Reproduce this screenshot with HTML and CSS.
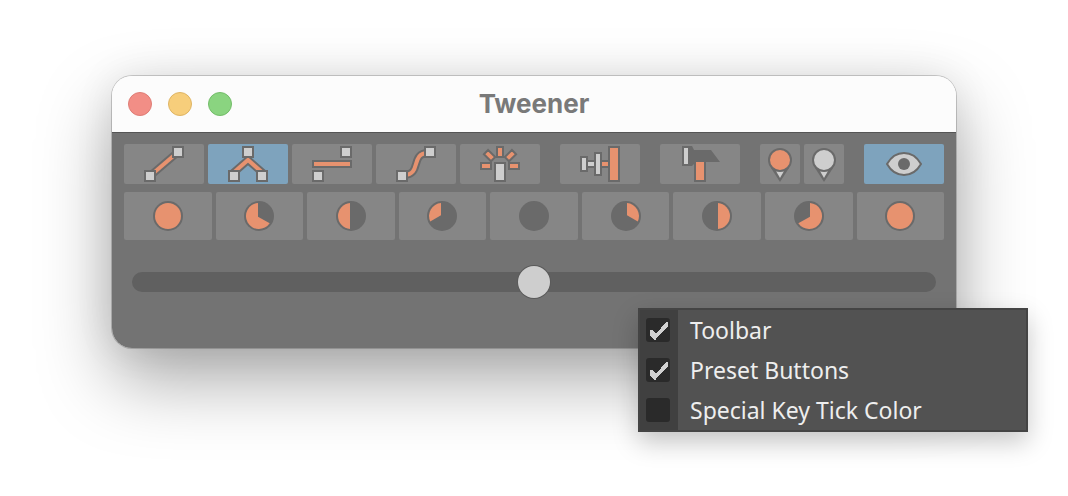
FILE: index.html
```html
<!DOCTYPE html>
<html lang="en">
<head>
<meta charset="utf-8">
<title>Tweener</title>
<link rel="stylesheet" href="styles.css">
</head>
<body>
<main class="window">
  <header class="titlebar">
    <div class="lights">
      <button class="light close" aria-label="Close"></button>
      <button class="light minimize" aria-label="Minimize"></button>
      <button class="light maximize" aria-label="Zoom"></button>
    </div>
    <h1 class="title">Tweener</h1>
  </header>
  <section class="panel">
    <div class="toolbar">
      <div class="group modes">
        <button class="tool" aria-label="Between"><svg class="icon" viewBox="0 0 40 40"><path class="edge" d="M6 32L34 8"/><path class="core" d="M6 32L34 8"/><path class="node" d="M1 27h10v10H1zM29 3h10v10H29z"/></svg></button>
        <button class="tool active" aria-label="Towards"><svg class="icon" viewBox="0 0 40 40"><path class="edge" d="M4 30L20 16L36 30"/><path class="core" d="M4 30L20 16L36 30"/><path class="node" d="M1 27h10v10H1zM29 27h10v10H29zM15 3h10v10H15z"/></svg></button>
        <button class="tool" aria-label="Average"><svg class="icon" viewBox="0 0 40 40"><path class="accent" d="M1 17h38v6H1z"/><path class="node" d="M1 27h10v10H1zM29 3h10v10H29z"/></svg></button>
        <button class="tool" aria-label="Curve"><svg class="icon" viewBox="0 0 40 40"><path class="edge" d="M8 31C26 31 14 9 32 9"/><path class="core" d="M8 31C26 31 14 9 32 9"/><path class="node" d="M1 27h10v10H1zM29 3h10v10H29z"/></svg></button>
        <button class="tool" aria-label="Default"><svg class="icon" viewBox="0 0 40 40"><path class="accent" d="M17 3h6v10h-6zM1 19h10v6H1zM29 19h10v6H29z"/><path class="accent" d="M8.1 6L15.2 13L11 17.3L3.9 10.2zM31.9 6L24.8 13L29 17.3L36.1 10.2z"/><path class="node" d="M15 19h10v18H15z"/></svg></button>
      </div>
      <div class="group">
        <button class="tool" aria-label="Nudge"><svg class="icon" viewBox="0 0 40 40"><path class="node" d="M7 17h8v6H7z"/><path class="accent" d="M21 17h8v6h-8z"/><path class="node" d="M1 13h6v14H1zM15 9h6v22h-6z"/><path class="accent" d="M29 3h10v34H29z"/></svg></button>
      </div>
      <div class="group">
        <button class="tool" aria-label="Hammer"><svg class="icon" viewBox="0 0 40 40"><path class="dark" d="M2 2h10l2 4h17l9 12H26v20H14V20l-2 2H2z"/><path class="light-fill" d="M4 4h4v16H4z"/><path class="accent-fill" d="M16 18h8v18h-8z"/></svg></button>
      </div>
      <div class="group pins">
        <button class="tool" aria-label="Special key"><svg class="icon" viewBox="0 0 40 40"><path class="dark" d="M11 24L20 38L29 24z"/><path class="light-fill" d="M16 27h8l-4 7z"/><circle class="accent" cx="20" cy="16" r="11"/></svg></button>
        <button class="tool" aria-label="Normal key"><svg class="icon" viewBox="0 0 40 40"><path class="dark" d="M11 24L20 38L29 24z"/><path class="light-fill" d="M16 27h8l-4 7z"/><circle class="node" cx="20" cy="16" r="11"/></svg></button>
      </div>
      <div class="group">
        <button class="tool active" aria-label="Overshoot"><svg class="icon" viewBox="0 0 40 40"><path class="node" d="M3 20C7 13 13 9 20 9S33 13 37 20C33 27 27 31 20 31S7 27 3 20z"/><circle class="dark" cx="20" cy="20" r="6"/></svg></button>
      </div>
    </div>
    <div class="presets">
      <button class="preset" aria-label="-100%"><svg class="pie" viewBox="0 0 30 30"><circle class="dark" cx="15" cy="15" r="15"/><circle class="accent-fill" cx="15" cy="15" r="13"/></svg></button>
      <button class="preset" aria-label="-66%"><svg class="pie" viewBox="0 0 30 30"><circle class="dark" cx="15" cy="15" r="15"/><path class="accent-fill" d="M14 2.04A13 13 0 1 0 25.7 22.3L14 15.7z"/></svg></button>
      <button class="preset" aria-label="-50%"><svg class="pie" viewBox="0 0 30 30"><circle class="dark" cx="15" cy="15" r="15"/><path class="accent-fill" d="M14 2.04A13 13 0 0 0 14 27.96z"/></svg></button>
      <button class="preset" aria-label="-33%"><svg class="pie" viewBox="0 0 30 30"><circle class="dark" cx="15" cy="15" r="15"/><path class="accent-fill" d="M14 2.04A13 13 0 0 0 3.2 20.4L14 14.3z"/></svg></button>
      <button class="preset" aria-label="0%"><svg class="pie" viewBox="0 0 30 30"><circle class="dark" cx="15" cy="15" r="15"/></svg></button>
      <button class="preset" aria-label="33%"><svg class="pie" viewBox="0 0 30 30"><circle class="dark" cx="15" cy="15" r="15"/><path class="accent-fill" d="M16 2.04A13 13 0 0 1 26.8 20.4L16 14.3z"/></svg></button>
      <button class="preset" aria-label="50%"><svg class="pie" viewBox="0 0 30 30"><circle class="dark" cx="15" cy="15" r="15"/><path class="accent-fill" d="M16 2.04A13 13 0 0 1 16 27.96z"/></svg></button>
      <button class="preset" aria-label="66%"><svg class="pie" viewBox="0 0 30 30"><circle class="dark" cx="15" cy="15" r="15"/><path class="accent-fill" d="M16 2.04A13 13 0 1 1 4.3 22.3L16 15.7z"/></svg></button>
      <button class="preset" aria-label="100%"><svg class="pie" viewBox="0 0 30 30"><circle class="dark" cx="15" cy="15" r="15"/><circle class="accent-fill" cx="15" cy="15" r="13"/></svg></button>
    </div>
    <input class="slider" type="range" min="-100" max="100" value="0" aria-label="Tween amount">
  </section>
  <div class="menu">
    <label class="item"><span class="check"><input class="box" type="checkbox" checked><svg class="tick" viewBox="0 0 24 24"><path d="M4 12H7L10 16L20 4H22V8L10 20V22H8L4 18z"/></svg></span><span class="text">Toolbar</span></label>
    <label class="item"><span class="check"><input class="box" type="checkbox" checked><svg class="tick" viewBox="0 0 24 24"><path d="M4 12H7L10 16L20 4H22V8L10 20V22H8L4 18z"/></svg></span><span class="text">Preset Buttons</span></label>
    <label class="item"><span class="check"><input class="box" type="checkbox"><svg class="tick" viewBox="0 0 24 24"><path d="M4 12H7L10 16L20 4H22V8L10 20V22H8L4 18z"/></svg></span><span class="text">Special Key Tick Color</span></label>
  </div>
</main>
</body>
</html>
```
FILE: styles.css
```css
:root {
  --orange: #e7926f;
  --edge: #6a6a6a;
  --pale: #cecece;
}
* { box-sizing: border-box; }
body {
  margin: 0;
  padding: 76px 112px 148px;
  background: #fff;
  overflow: hidden;
}
button {
  border: 0;
  padding: 0;
}
.window {
  position: relative;
  border-radius: 20px;
  box-shadow: 0 0 0 1px rgba(0, 0, 0, .18), 0 0 40px rgba(0, 0, 0, .08), 0 32px 72px rgba(0, 0, 0, .34);
}
.titlebar {
  display: grid;
  grid-template-columns: 1fr auto 1fr;
  align-items: center;
  height: 56px;
  padding: 0 16px;
  background: #fcfcfc;
  border-radius: 20px 20px 0 0;
}
.lights {
  display: flex;
  gap: 16px;
}
.light {
  width: 24px;
  height: 24px;
  border: 1px solid;
  border-radius: 50%;
}
.close { background: #f28e86; border-color: #df7d76; }
.minimize { background: #f7ce7b; border-color: #dfb564; }
.maximize { background: #8ad480; border-color: #73bd69; }
.title {
  margin: 0;
  font: 700 26px/32px Inter, "Liberation Sans", sans-serif;
  color: #797979;
}
.panel {
  display: flex;
  flex-direction: column;
  gap: 8px;
  padding: 11px 12px 48px;
  background: #737373;
  border-top: 1px solid #555;
  border-radius: 0 0 20px 20px;
}
.toolbar {
  display: flex;
  gap: 20px;
}
.group {
  display: flex;
  flex: 2;
  gap: 4px;
}
.modes { flex: 0 1 416px; }
.pins { flex: 0 1 84px; }
.tool, .preset {
  display: flex;
  flex: 1;
  align-items: center;
  justify-content: center;
  background: #868686;
  border-radius: 2px;
}
.tool { height: 40px; }
.preset { height: 48px; }
.active { background: #7ea3bd; }
.icon {
  width: 40px;
  height: 40px;
}
.pie {
  width: 30px;
  height: 30px;
}
.edge { fill: none; stroke: var(--edge); stroke-width: 8; }
.core { fill: none; stroke: var(--orange); stroke-width: 4; }
.node { fill: var(--pale); stroke: var(--edge); stroke-width: 2; }
.accent { fill: var(--orange); stroke: var(--edge); stroke-width: 2; }
.dark { fill: var(--edge); }
.light-fill { fill: var(--pale); }
.accent-fill { fill: var(--orange); }
.presets {
  display: flex;
  gap: 4px;
}
.slider {
  appearance: none;
  height: 20px;
  margin: 24px 8px 8px;
  background: #606060;
  border-radius: 10px;
}
.slider::-webkit-slider-thumb {
  appearance: none;
  width: 32px;
  height: 32px;
  background: var(--pale);
  border-radius: 50%;
  box-shadow: 0 0 0 1px #5a5a5a;
}
.menu {
  position: absolute;
  top: 232px;
  right: -72px;
  width: 390px;
  border: 2px solid #444;
  background: linear-gradient(90deg, #404040 38px, #525252 38px);
  box-shadow: 0 10px 24px rgba(0, 0, 0, .22);
}
.item {
  display: flex;
  align-items: center;
  gap: 20px;
  height: 40px;
  padding-left: 6px;
}
.check {
  display: grid;
  width: 24px;
  height: 24px;
}
.box {
  grid-area: 1 / 1;
  appearance: none;
  width: 24px;
  height: 24px;
  margin: 0;
  background: #2a2a2a;
  border-radius: 3px;
}
.tick {
  grid-area: 1 / 1;
  visibility: hidden;
  fill: #d0d0d0;
  shape-rendering: crispEdges;
  pointer-events: none;
  z-index: 1;
}
.box:checked + .tick { visibility: visible; }
.text {
  font: 400 23px/32px "Noto Sans", "Open Sans", sans-serif;
  color: #eee;
}
```
